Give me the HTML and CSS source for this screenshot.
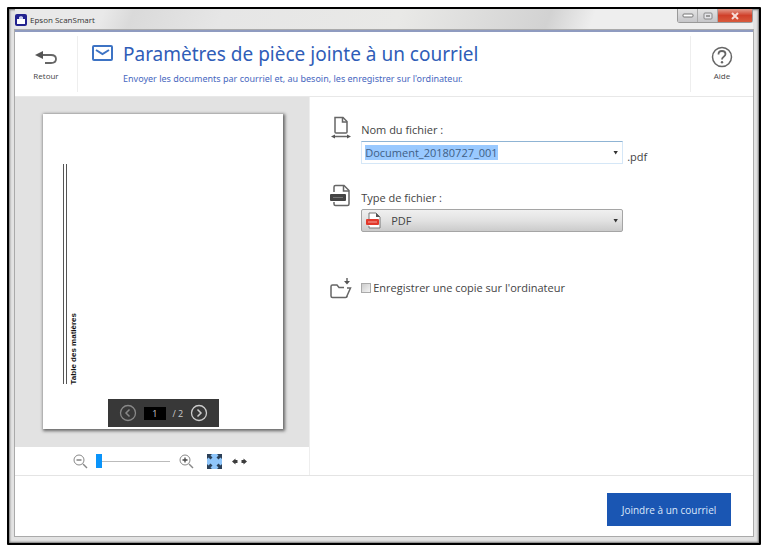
FILE: index.html
```html
<!DOCTYPE html>
<html lang="fr">
<head>
    <meta charset="UTF-8">
    <meta name="viewport" content="width=device-width, initial-scale=1.0">
    <title>Epson ScanSmart</title>
    <link rel="stylesheet" href="styles.css">
</head>
<body>
    <div class="window">
        <div class="titlebar">
            <svg class="app-icon" viewBox="0 0 12 12" aria-hidden="true">
                <rect width="12" height="12" rx="2" fill="#23238f"/>
                <path d="M2 5h8v5H2z" fill="#fff"/>
                <path d="M4 5V3l2-1 2 1v2z" fill="#c9cdf2"/>
            </svg>
            <span class="app-name">Epson ScanSmart</span>
            <div class="window-buttons">
                <button type="button" aria-label="Réduire"><svg width="12" height="6" viewBox="0 0 12 6"><rect x="1" y="1" width="10" height="3" rx="1" fill="#fff" stroke="#777"/></svg></button>
                <button type="button" aria-label="Agrandir"><svg width="10" height="8" viewBox="0 0 10 8"><rect x="1" y="1" width="8" height="6" rx="1" fill="#e4e4e8" stroke="#888"/><rect x="3" y="3" width="4" height="2" fill="#999"/></svg></button>
                <button type="button" class="close" aria-label="Fermer"><svg width="8" height="8" viewBox="0 0 8 8"><path d="M1 1l6 6M7 1L1 7" stroke="#f7dcd6" stroke-width="2"/></svg></button>
            </div>
        </div>

        <div class="content">
            <header class="header">
                <button type="button" class="nav-btn">
                    <svg width="22" height="16" viewBox="0 0 22 16" fill="none" aria-hidden="true">
                        <path d="M6 5h10q5 0 5 4t-5 4H10" stroke="#666" stroke-width="1.800"/>
                        <path d="M0 5l8-4v8z" fill="#555"/>
                    </svg>
                    Retour
                </button>
                <div class="heading">
                    <svg class="mail-icon" width="21" height="16" viewBox="0 0 21 16" fill="none" stroke="#3d73c4" stroke-width="2" aria-hidden="true">
                        <rect x="1" y="1" width="19" height="14" rx="1"/>
                        <path d="M4 5l6.500 4 6.500-4"/>
                    </svg>
                    <div>
                        <h1>Paramètres de pièce jointe à un courriel</h1>
                        <p>Envoyer les documents par courriel et, au besoin, les enregistrer sur l'ordinateur.</p>
                    </div>
                </div>
                <button type="button" class="nav-btn help">
                    <svg width="22" height="22" viewBox="0 0 22 22" fill="none" stroke="#666" aria-hidden="true">
                        <circle cx="11" cy="11" r="9.500" stroke-width="1.500"/>
                        <path d="M7.500 8.500q0-3.500 3.500-3.500t3.500 3q0 1.500-1.800 2.700T11 13.500" stroke-width="1.800"/>
                        <circle cx="11" cy="16.300" r="1.200" fill="#666" stroke="none"/>
                    </svg>
                    Aide
                </button>
            </header>

            <main class="main">
                <section class="preview">
                    <div class="canvas">
                        <div class="paper">
                            <div class="paper-text"><span>Table des matières</span></div>
                            <div class="pager">
                                <button type="button" class="previous" aria-label="Page précédente"><svg width="18" height="18" viewBox="0 0 18 18" fill="none" stroke="currentColor"><circle cx="9" cy="9" r="7.500" stroke-width="1.300"/><path d="M10.500 5.500L7 9l3.500 3.500" stroke-width="1.500"/></svg></button>
                                <input type="text" value="1" aria-label="Page">
                                <span>/ 2</span>
                                <button type="button" aria-label="Page suivante"><svg width="18" height="18" viewBox="0 0 18 18" fill="none" stroke="currentColor"><circle cx="9" cy="9" r="7.500" stroke-width="1.300"/><path d="M7.500 5.500L11 9l-3.500 3.500" stroke-width="1.500"/></svg></button>
                            </div>
                        </div>
                    </div>
                    <div class="zoom-bar">
                        <button type="button" aria-label="Zoom arrière"><svg width="15" height="15" viewBox="0 0 15 15" fill="none" stroke="#888"><circle cx="6" cy="6" r="5"/><path d="M3.500 6h5" stroke="#444"/><path d="M10 10l4 4" stroke-width="1.500"/></svg></button>
                        <input type="range" min="0" max="100" value="0" aria-label="Zoom">
                        <button type="button" aria-label="Zoom avant"><svg width="15" height="15" viewBox="0 0 15 15" fill="none" stroke="#888"><circle cx="6" cy="6" r="5"/><path d="M3.500 6h5M6 3.500v5" stroke="#444" stroke-width="1.300"/><path d="M10 10l4 4" stroke-width="1.500"/></svg></button>
                        <button type="button" class="fit" aria-label="Ajuster"><svg width="15" height="15" viewBox="0 0 15 15"><rect width="15" height="15" fill="#8fc6fb"/><path d="M0 0h5L3.500 1.500 5.500 3.500l-2 2-2-2L0 5zM15 0v5l-1.500-1.500-2 2-2-2 2-2L10 0zM0 15v-5l1.500 1.500 2-2 2 2-2 2L5 15zM15 15h-5l1.500-1.500-2-2 2-2 2 2L15 10z" fill="#2b4058"/></svg></button>
                        <button type="button" aria-label="Ajuster à la largeur"><svg width="15" height="7" viewBox="0 0 15 7" fill="#3c3c3c"><path d="M0 3.500L3.500.5v1.500H5.500v3h-2v1.500zM15 3.500L11.500.5v1.500h-2v3h2v1.500z"/></svg></button>
                    </div>
                </section>

                <form class="settings" id="settings">
                    <div class="field">
                        <svg class="field-icon" width="22" height="24" viewBox="0 0 22 24" fill="none" stroke="#666" stroke-width="1.500" aria-hidden="true">
                            <path d="M5 17V2.500h8l4 4V17q0 1-1 1H6q-1 0-1-1z"/>
                            <path d="M12.500 2.500V7H17"/>
                            <path d="M4 21.500h14"/>
                            <path d="M1 21.500l4-2v4zM21 21.500l-4-2v4z" fill="#555" stroke="none"/>
                        </svg>
                        <div class="field-body">
                            <label for="filename">Nom du fichier :</label>
                            <div class="name-row">
                                <div class="combo">
                                    <input type="text" id="filename" name="filename" value="Document_20180727_001">
                                    <button type="button" aria-label="Noms récents"></button>
                                </div>
                                <span class="extension">.pdf</span>
                            </div>
                        </div>
                    </div>

                    <div class="field">
                        <svg class="field-icon" width="22" height="24" viewBox="0 0 22 24" fill="none" stroke="#666" stroke-width="1.500" aria-hidden="true">
                            <path d="M4 9V4q0-1.500 1.500-1.500H14l5 5V21q0 1.500-1.500 1.500h-12Q4 22.500 4 21v-2"/>
                            <path d="M13.500 2.500V8H19"/>
                            <rect x="0" y="11" width="16" height="7" rx="1" fill="#444" stroke="none"/>
                            <path d="M3 14.500h10" stroke="#777" stroke-width="1"/>
                        </svg>
                        <div class="field-body">
                            <label for="filetype">Type de fichier :</label>
                            <div class="select-box">
                                <svg width="16" height="17" viewBox="0 0 16 17" fill="none" aria-hidden="true">
                                    <path d="M3 7V1h7l4 4v11H3v-2" stroke="#777" fill="#fff"/>
                                    <path d="M10 1v4h4" fill="#555"/>
                                    <rect x="0" y="7" width="13" height="6" rx="1" fill="#e2382b"/>
                                    <path d="M2 10h9" stroke="#f4a49c"/>
                                </svg>
                                <select id="filetype" name="filetype">
                                    <option>PDF</option>
                                </select>
                            </div>
                        </div>
                    </div>

                    <div class="field copy">
                        <svg class="field-icon" width="22" height="24" viewBox="0 0 22 24" fill="none" stroke="#666" stroke-width="1.500" aria-hidden="true">
                            <path d="M17 20q0 1.500-1.500 1.500h-13Q1 21.500 1 20V10.500Q1 9 2.500 9H7l2 2.500h5"/>
                            <path d="M16.500 21l4-9H17"/>
                            <path d="M17 2v5"/>
                            <path d="M14 5h6l-3 3.500z" fill="#555" stroke="none"/>
                        </svg>
                        <div class="checkbox-group">
                            <input type="checkbox" id="copy" name="copy">
                            <label for="copy">Enregistrer une copie sur l'ordinateur</label>
                        </div>
                    </div>
                </form>
            </main>

            <footer class="footer">
                <button type="submit" form="settings" class="submit-btn">Joindre à un courriel</button>
            </footer>
        </div>
    </div>

    <script>
        const filename = document.getElementById('filename');
        filename.focus();
        filename.select();
    </script>
</body>
</html>
```
FILE: styles.css
```css
* {
    box-sizing: border-box;
}

body {
    display: flex;
    min-height: 100vh;
    margin: 0;
    padding: 7px 7px 3px;
    background: #fff;
    color: #444;
    font-family: "Open Sans", "Noto Sans", sans-serif;
    font-size: 11px;
}

button,
input,
select {
    margin: 0;
    padding: 0;
    border: none;
    outline: none;
    background: none;
    color: inherit;
    font-family: inherit;
    font-size: inherit;
}

svg {
    display: block;
    flex-shrink: 0;
}

h1,
p {
    margin: 0;
    font-weight: normal;
}

.window {
    display: flex;
    flex: 1;
    flex-direction: column;
    padding: 0 6px 7px;
    border: 2px solid #000;
    border-radius: 1px;
    background: #e3e3e3;
    box-shadow: inset 0 0 2px 1px #777;
}

/* Barre de titre */
.titlebar {
    display: flex;
    align-items: center;
    height: 21px;
    background: linear-gradient(110deg, #e9e9e9 12%, #dadada 16%, #e6e6e6 28%, #e9e9e7 52%, #d2d2d2 72%, #eee 78%);
}

.app-icon {
    width: 12px;
    height: 12px;
}

.app-name {
    margin-left: 3px;
    color: #333;
    font-size: 8px;
}

.window-buttons {
    display: flex;
    align-self: flex-start;
    margin-left: auto;
    border: 1px solid #999;
    border-top: none;
    border-radius: 0 0 3px 3px;
}

.window-buttons button {
    display: flex;
    align-items: center;
    justify-content: center;
    width: 20px;
    height: 13px;
    border-right: 1px solid #aaa;
    background: linear-gradient(#e4e4e4, #c6c6c9);
}

.window-buttons .close {
    width: 34px;
    border: none;
    background: linear-gradient(#e39b8c, #d0402a 50%, #d85a3c);
}

.content {
    display: flex;
    flex: 1;
    flex-direction: column;
    border-top: 2px solid #8f9bc0;
    background: #fff;
    box-shadow: 0 0 0 1px #aaa;
}

/* En-tête */
.header {
    display: flex;
    height: 65px;
    border-bottom: 1px solid #e8e8e8;
}

.nav-btn {
    display: flex;
    flex-direction: column;
    align-items: center;
    justify-content: flex-end;
    gap: 4px;
    width: 63px;
    margin: 4px 0;
    padding-bottom: 10px;
    border-right: 1px solid #eee;
    font-size: 8px;
    line-height: 12px;
}

.nav-btn.help {
    gap: 2px;
    border-right: none;
    border-left: 1px solid #eee;
}

.heading {
    display: flex;
    flex: 1;
    gap: 10px;
    padding: 9px 0 0 14px;
    font-family: "Noto Sans", "Open Sans", sans-serif;
}

.mail-icon {
    margin-top: 4px;
}

h1 {
    color: #2f5db8;
    font-size: 19px;
    line-height: 26px;
}

.heading p {
    margin-top: 6px;
    color: #4868c0;
    font-size: 9px;
    line-height: 12px;
}

.main {
    display: flex;
    flex: 1;
    border-bottom: 1px solid #e4e4e4;
}

/* Aperçu */
.preview {
    display: flex;
    flex: 0 0 40%;
    flex-direction: column;
    border-right: 1px solid #eee;
}

.canvas {
    display: flex;
    flex: 1;
    padding: 17px 26px 18px 28px;
    background: #e2e2e2;
}

.paper {
    display: flex;
    position: relative;
    flex: 1;
    padding: 50px 20px 45px;
    background: #fff;
    box-shadow: 1px 1px 3px 1px #666;
}

.paper-text {
    display: flex;
    align-items: flex-end;
    padding-left: 2px;
    border-left: 4px double #555;
}

.paper-text span {
    color: #111;
    font-family: "Liberation Sans", sans-serif;
    font-size: 8px;
    font-weight: bold;
    line-height: 9px;
    writing-mode: vertical-rl;
    transform: rotate(180deg);
}

.pager {
    display: flex;
    position: absolute;
    bottom: 2px;
    left: 65px;
    align-items: center;
    justify-content: space-between;
    width: 111px;
    height: 28px;
    padding: 0 11px;
    background: #383838;
    color: #ccc;
    font-size: 9px;
}

.pager .previous {
    color: #888;
}

.pager input {
    width: 22px;
    height: 13px;
    background: #000;
    text-align: center;
}

.zoom-bar {
    display: flex;
    align-items: center;
    height: 28px;
    padding-left: 58px;
}

.zoom-bar input {
    width: 74px;
    height: 14px;
    margin: 0 9px 0 8px;
    background: linear-gradient(#bbb, #bbb) center / 100% 1px no-repeat;
    appearance: none;
}

.zoom-bar input::-webkit-slider-thumb {
    width: 6px;
    height: 14px;
    background: #0a94fa;
    appearance: none;
}

.zoom-bar .fit {
    margin: 0 10px 0 13px;
}

/* Paramètres */
.settings {
    flex: 1;
    padding: 18px 20px 0;
}

.field {
    display: flex;
    gap: 9px;
    height: 68px;
}

.field-body label {
    display: block;
    padding-top: 7px;
    line-height: 16px;
}

.name-row {
    display: flex;
    align-items: flex-end;
    gap: 4px;
    margin-top: 3px;
}

.combo {
    display: flex;
    width: 262px;
    height: 23px;
    border: 1px solid #d5e7f7;
    border-top-color: #8fb4d4;
}

.combo input {
    flex: 1;
    min-width: 0;
    padding-left: 3px;
}

.combo input::selection {
    background: #99c9ff;
    color: #3f5f86;
}

.combo button {
    width: 9px;
}

.combo button::before,
.select-box::after {
    display: block;
    width: 5px;
    height: 4px;
    background: #333;
    clip-path: polygon(0 0, 100% 0, 50% 100%);
    content: "";
}

.extension {
    line-height: 14px;
}

.select-box {
    display: flex;
    position: relative;
    align-items: center;
    width: 262px;
    margin-top: 3px;
}

.select-box svg {
    position: absolute;
    left: 5px;
}

.select-box::after {
    position: absolute;
    right: 5px;
    pointer-events: none;
}

select {
    width: 100%;
    height: 23px;
    padding-left: 29px;
    border: 1px solid #a5a5a5;
    border-radius: 2px;
    background: linear-gradient(#f0f0f0, #e2e2e2 50%, #cbcbcb);
    appearance: none;
}

.copy {
    margin-top: 25px;
}

.checkbox-group {
    display: flex;
    align-items: center;
    align-self: flex-start;
    gap: 2px;
    padding-top: 4px;
    line-height: 16px;
}

.checkbox-group input {
    width: 10px;
    height: 10px;
    border: 1px solid #aaa;
    background: linear-gradient(135deg, #ccc, #f4f4f4);
    appearance: none;
}

.checkbox-group input:checked {
    background: #2f5db8;
}

.footer {
    display: flex;
    align-items: flex-start;
    justify-content: flex-end;
    height: 60px;
    padding: 17px 22px 0 0;
}

.submit-btn {
    width: 124px;
    height: 33px;
    background: #1a56b3;
    color: #dce8fa;
    font-size: 10px;
    cursor: pointer;
}
```
